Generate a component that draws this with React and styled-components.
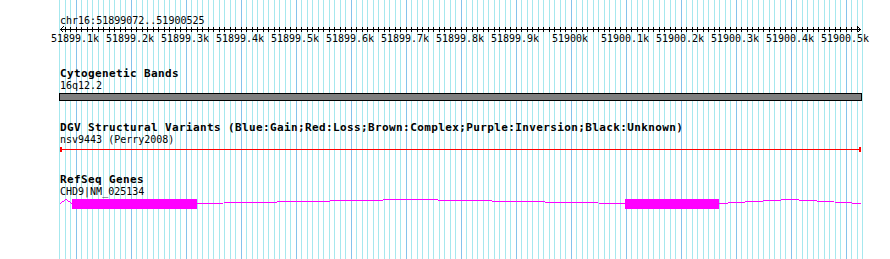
import React from "react";
import styled, { createGlobalStyle } from "styled-components";

const START = 51899072;
const END = 51900525;
const ORIGIN_BP = 51899100;
const ORIGIN_X = 76;
const SCALE = 0.55;

const px = (bp) => ORIGIN_X + (bp - ORIGIN_BP) * SCALE;
const crisp = (bp) => Math.floor(px(bp)) + 0.5;

const gridLines = [];
for (let bp = 51899070; bp <= 51900530; bp += 10) gridLines.push(bp);

const ticks = [];
for (let bp = 51899080; bp <= 51900520; bp += 10) ticks.push(bp);

const labels = [];
for (let bp = 51899100; bp <= 51900500; bp += 100) {
  const k = bp / 1000;
  labels.push({ bp, text: (Number.isInteger(k) ? k : k.toFixed(1)) + "k" });
}

function App() {
  return (
    <>
      <Global />
      <Page>
        <Grid width="890" height="259">
          {gridLines.map((bp) => (
            <GridLine key={bp} x1={crisp(bp)} x2={crisp(bp)} y1="0" y2="259" major={bp % 100 === 0 ? 1 : 0} />
          ))}
        </Grid>

        <Content>
          <Ruler>
            <Small>chr16:{START}..{END}</Small>
            <Axis width="890" height="7">
              <line x1="60" x2="861" y1="3.5" y2="3.5" stroke="#000" />
              <polyline points="63.5,0.5 60.5,3.5 63.5,6.5" fill="none" stroke="#000" />
              <polyline points="857.5,0.5 860.5,3.5 857.5,6.5" fill="none" stroke="#000" />
              {ticks.map((bp) => (
                <line key={bp} x1={crisp(bp)} x2={crisp(bp)} y1="1" y2="6" stroke="#000" />
              ))}
            </Axis>
            <TickLabels>
              {labels.map((l) => (
                <TickLabel key={l.bp} style={{ left: px(l.bp) - 1 }}>
                  {l.text}
                </TickLabel>
              ))}
            </TickLabels>
          </Ruler>

          <Track gap={24}>
            <Title>Cytogenetic Bands</Title>
            <Small>16q12.2</Small>
            <Drawing width="890" height="10">
              <rect x="59.5" y="2.5" width="802" height="7" fill="#7f7f7f" stroke="#000" />
            </Drawing>
          </Track>

          <Track gap={21}>
            <Title>DGV Structural Variants (Blue:Gain;Red:Loss;Brown:Complex;Purple:Inversion;Black:Unknown)</Title>
            <Small>nsv9443 (Perry2008)</Small>
            <Drawing width="890" height="8">
              <line x1="60" x2="861" y1="4.5" y2="4.5" stroke="#ff0000" />
              <rect x="60" y="2" width="2" height="5" fill="#ff0000" />
              <rect x="859" y="2" width="2" height="5" fill="#ff0000" />
            </Drawing>
          </Track>

          <Track gap={21}>
            <Title>RefSeq Genes</Title>
            <Small>CHD9|NM_025134</Small>
            <Drawing width="890" height="14">
              <polyline points="60,6.5 66,2.5 72,6.5" fill="none" stroke="#ff00ff" />
              <polyline points="197,6.5 411,2.5 625,6.5" fill="none" stroke="#ff00ff" />
              <polyline points="719,6.5 790,2.5 861,6.5" fill="none" stroke="#ff00ff" />
              <rect x="72" y="2" width="125" height="10" fill="#ff00ff" />
              <rect x="625" y="2" width="94" height="10" fill="#ff00ff" />
            </Drawing>
          </Track>
        </Content>
      </Page>
    </>
  );
}

export default App;

const Global = createGlobalStyle`
  body {
    margin: 0;
    background: #fff;
  }
`;

const Page = styled.div`
  position: relative;
  width: 890px;
  height: 259px;
  overflow: hidden;
  background: #fff;
  color: #000;
  font-family: "DejaVu Sans Mono", "Liberation Mono", monospace;
`;

const Grid = styled.svg`
  position: absolute;
  top: 0;
  left: 0;
  shape-rendering: crispEdges;
`;

const GridLine = styled.line`
  stroke: ${(p) => (p.major ? "#86c2ec" : "#a6e8ee")};
  stroke-width: 1;
`;

const Content = styled.div`
  position: relative;
  display: flex;
  flex-direction: column;
`;

const Ruler = styled.div`
  display: flex;
  flex-direction: column;
  padding-top: 16px;
`;

const Small = styled.div`
  padding-left: 60px;
  font-size: 10px;
  line-height: 10px;
  height: 10px;
  white-space: nowrap;
`;

const Axis = styled.svg`
  display: block;
  shape-rendering: crispEdges;
`;

const TickLabels = styled.div`
  position: relative;
  height: 10px;
  margin-top: 1px;
`;

const TickLabel = styled.span`
  position: absolute;
  top: 0;
  transform: translateX(-50%);
  font-size: 10px;
  line-height: 10px;
  white-space: nowrap;
`;

const Track = styled.div`
  display: flex;
  flex-direction: column;
  margin-top: ${(p) => p.gap}px;
`;

const Title = styled.div`
  padding-left: 60px;
  font-size: 11px;
  letter-spacing: 0.38px;
  font-weight: bold;
  line-height: 12px;
  height: 12px;
  margin-bottom: 1px;
  white-space: nowrap;
`;

const Drawing = styled.svg`
  display: block;
  shape-rendering: crispEdges;
`;
